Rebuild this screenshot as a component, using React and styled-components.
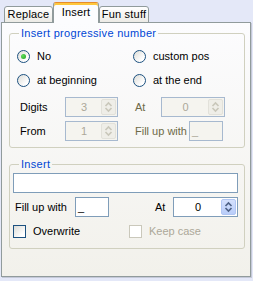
import React from 'react';
import styled, { createGlobalStyle } from 'styled-components';

const GlobalStyle = createGlobalStyle`
    html, body {
        margin: 0;
        padding: 0;
        background: #E4E8F8;
    }
    body {
        font-family: "Liberation Sans", Arial, sans-serif;
        font-size: 11px;
        line-height: 13px;
        color: #000;
    }
`;

const Window = styled.div`
    width: 253px;
    height: 281px;
    box-sizing: border-box;
    padding: 2px 2px 0 1px;
    display: flex;
    flex-direction: column;
`;

const TabRow = styled.div`
    display: flex;
    align-items: flex-end;
    height: 21px;
    padding-left: 3px;
    margin-bottom: -1px;
    position: relative;
    z-index: 1;
`;

const Tab = styled.div`
    box-sizing: border-box;
    width: ${(p) => p.$w}px;
    height: ${(p) => (p.$active ? 21 : 17)}px;
    border: 1px solid #919B9C;
    border-bottom: ${(p) => (p.$active ? 'none' : '1px solid #919B9C')};
    border-top-color: ${(p) => (p.$active ? '#E68B2C' : '#919B9C')};
    border-radius: 3px 3px 0 0;
    background: ${(p) =>
        p.$active ? '#FCFCFE' : 'linear-gradient(#FFFFFF, #ECEBE6)'};
    box-shadow: ${(p) => (p.$active ? 'inset 0 2px 0 #FFC73C' : 'none')};
    display: flex;
    justify-content: center;
    white-space: nowrap;
    letter-spacing: 0.2px;
    padding-top: ${(p) => (p.$active ? 3 : 1)}px;
`;

const Sheet = styled.div`
    width: 250px;
    height: 255px;
    box-sizing: border-box;
    border: 1px solid #919B9C;
    box-shadow: 1px 1px 0 #C5C9D8;
    background: linear-gradient(#FCFCFE, #F2F1EB);
    padding: 4px 5px 0 7px;
    display: flex;
    flex-direction: column;
    gap: 10px;
`;

const Group = styled.fieldset`
    margin: 0;
    padding: 0;
    border: 1px solid #D0D0BF;
    border-radius: 3px;
    min-width: 0;
`;

const Legend = styled.legend`
    margin-left: 9px;
    padding: 0 2px;
    color: #0046D5;
    line-height: 13px;
    letter-spacing: 0.3px;
`;

const GroupBody = styled.div`
    padding: ${(p) => p.$pad};
    display: flex;
    flex-direction: column;
`;

const TwoCol = styled.div`
    display: grid;
    grid-template-columns: 116px 1fr;
    row-gap: ${(p) => p.$gap}px;
    margin-top: ${(p) => p.$top || 0}px;
    padding-left: ${(p) => p.$left || 0}px;
`;

const Option = styled.label`
    display: flex;
    align-items: center;
    gap: 7px;
    height: 16px;
    white-space: nowrap;
    color: ${(p) => (p.$disabled ? '#ACA899' : '#000')};
`;

const RadioDot = styled.span`
    width: 13px;
    height: 13px;
    box-sizing: border-box;
    border-radius: 50%;
    border: 1px solid #1C5180;
    background: linear-gradient(135deg, #DCDCD7, #FFFFFF 75%);
    display: flex;
    align-items: center;
    justify-content: center;
    &::after {
        content: '';
        display: ${(p) => (p.$checked ? 'block' : 'none')};
        width: 5px;
        height: 5px;
        border-radius: 50%;
        background: radial-gradient(circle at 35% 35%, #5FDC5B, #21A121);
    }
`;

const CheckBox = styled.span`
    width: 13px;
    height: 13px;
    box-sizing: border-box;
    border: 1px solid ${(p) => (p.$disabled ? '#CAC8BB' : '#1C5180')};
    background: ${(p) =>
        p.$disabled ? '#FFFFFF' : 'linear-gradient(135deg, #DCDCD7, #FFFFFF 80%)'};
`;

const Field = styled.div`
    display: flex;
    align-items: center;
    height: 20px;
`;

const FieldLabel = styled.span`
    box-sizing: border-box;
    flex: none;
    width: ${(p) => p.$w}px;
    padding-left: ${(p) => p.$pl || 0}px;
    white-space: nowrap;
    color: ${(p) => p.$color || '#000'};
`;

const Edit = styled.div`
    box-sizing: border-box;
    flex: none;
    width: ${(p) => p.$w}px;
    height: 20px;
    border: 1px solid ${(p) => (p.$disabled ? '#A7B9CF' : '#7F9DB9')};
    background: ${(p) => (p.$disabled ? '#F5F4EF' : '#FFFFFF')};
    color: ${(p) => (p.$disabled ? '#ACA899' : '#000')};
    display: flex;
    align-items: center;
    padding: 1px;
`;

const EditText = styled.span`
    flex: 1;
    text-align: ${(p) => (p.$center ? 'center' : 'left')};
    padding-left: ${(p) => (p.$center ? 0 : 1)}px;
`;

const SpinButtons = styled.div`
    width: 15px;
    height: 16px;
    display: flex;
    border-radius: 2px;
    border: 1px solid ${(p) => (p.$disabled ? '#E2E1DA' : '#B1C6F3')};
    box-sizing: border-box;
    background: ${(p) =>
        p.$disabled ? '#EFEEE8' : 'linear-gradient(#D4E0FC, #B9CDF9)'};
    align-items: center;
    justify-content: center;
`;

const FullEdit = styled(Edit)`
    width: 225px;
    margin-left: 3px;
`;

const Row = styled.div`
    display: flex;
    align-items: center;
    justify-content: space-between;
    margin-top: ${(p) => p.$top}px;
`;

const Arrows = ({ color }) => (
    <svg width="9" height="12" viewBox="0 0 9 12">
        <path d="M1.5 5 L4.5 2 L7.5 5" fill="none" stroke={color} strokeWidth="1.6" />
        <path d="M1.5 7 L4.5 10 L7.5 7" fill="none" stroke={color} strokeWidth="1.6" />
    </svg>
);

const Spin = ({ w, value, disabled }) => (
    <Edit $w={w} $disabled={disabled}>
        <EditText $center>{value}</EditText>
        <SpinButtons $disabled={disabled}>
            <Arrows color={disabled ? '#C9C7BA' : '#4D6185'} />
        </SpinButtons>
    </Edit>
);

const Radio = ({ checked, children }) => (
    <Option>
        <RadioDot $checked={checked} />
        {children}
    </Option>
);

const Check = ({ disabled, children }) => (
    <Option $disabled={disabled}>
        <CheckBox $disabled={disabled} />
        {children}
    </Option>
);

const olive = '#6E6A48';

const App = () => (
    <Window>
        <GlobalStyle />
        <TabRow>
            <Tab $w={49}>Replace</Tab>
            <Tab $w={46} $active>Insert</Tab>
            <Tab $w={50}>Fun stuff</Tab>
        </TabRow>
        <Sheet>
            <Group>
                <Legend>Insert progressive number</Legend>
                <GroupBody $pad="8px 0 6px 7px">
                    <TwoCol $gap={8}>
                        <Radio checked>No</Radio>
                        <Radio>custom pos</Radio>
                        <Radio>at beginning</Radio>
                        <Radio>at the end</Radio>
                    </TwoCol>
                    <TwoCol $gap={4} $top={9}>
                        <Field>
                            <FieldLabel $w={48} $pl={3}>Digits</FieldLabel>
                            <Spin w={53} value="3" disabled />
                        </Field>
                        <Field>
                            <FieldLabel $w={28} $pl={2} $color={olive}>At</FieldLabel>
                            <Spin w={64} value="0" disabled />
                        </Field>
                        <Field>
                            <FieldLabel $w={48} $pl={3}>From</FieldLabel>
                            <Spin w={53} value="1" disabled />
                        </Field>
                        <Field>
                            <FieldLabel $w={56} $pl={2} $color={olive}>Fill up with</FieldLabel>
                            <Edit $w={34} $disabled>
                                <EditText>_</EditText>
                            </Edit>
                        </Field>
                    </TwoCol>
                </GroupBody>
            </Group>
            <Group>
                <Legend>Insert</Legend>
                <GroupBody $pad="2px 6px 9px 0">
                    <FullEdit />
                    <Row $top={4}>
                        <Field>
                            <FieldLabel $w={65} $pl={5}>Fill up with</FieldLabel>
                            <Edit $w={34}>
                                <EditText>_</EditText>
                            </Edit>
                        </Field>
                        <Field>
                            <FieldLabel $w={18}>At</FieldLabel>
                            <Spin w={65} value="0" />
                        </Field>
                    </Row>
                    <TwoCol $gap={0} $top={6} $left={3}>
                        <Check>Overwrite</Check>
                        <Check disabled>Keep case</Check>
                    </TwoCol>
                </GroupBody>
            </Group>
        </Sheet>
    </Window>
);

export default App;
